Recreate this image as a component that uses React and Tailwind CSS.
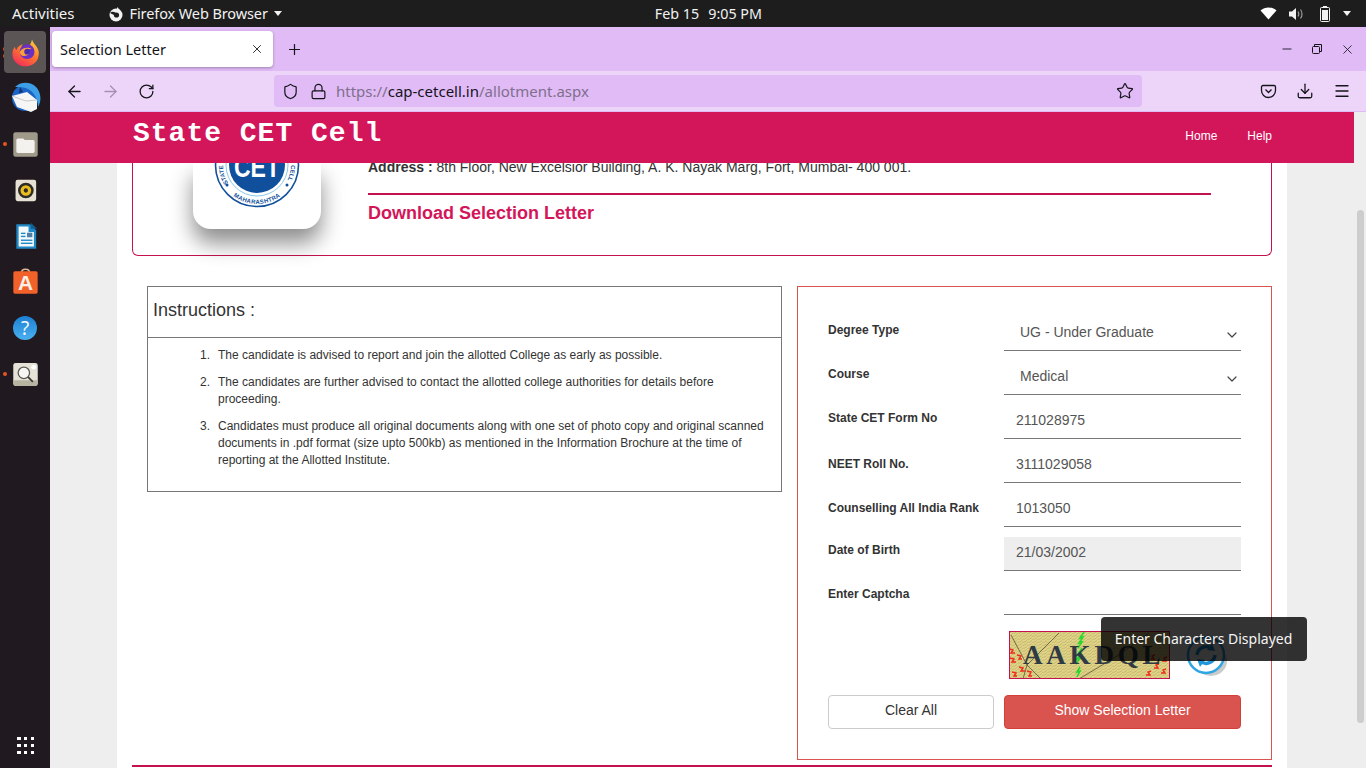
import React from 'react'
import {
    ArrowLeft,
    ArrowRight,
    RotateCw,
    Shield,
    Lock,
    Star,
    Download,
    Menu,
    Minus,
    X,
    Plus,
    ChevronDown
} from 'lucide-react'

const FirefoxIcon = () => (
    <svg width="31" height="31" viewBox="0 0 38 38">
        <defs>
            <linearGradient id="ffa" x1="0.8" y1="0" x2="0.2" y2="1">
                <stop offset="0" stopColor="#ffd23a" />
                <stop offset="0.45" stopColor="#ff7a2c" />
                <stop offset="1" stopColor="#f2295f" />
            </linearGradient>
        </defs>
        <path d="M27 3c1 4 3 5 5 8 3 4 4 8 3 12-1 8-8 13-16 13C10 36 3 29 3 21c0-4 1-7 3-9 0 2 1 3 2 4 1-4 4-6 8-7-1 1-2 2-2 3 3-1 6 0 8 0 3-2 4-5 5-9z" fill="url(#ffa)" />
        <circle cx="21" cy="18" r="9" fill="#6b2fc4" />
        <path d="M12 18c3-5 10-6 15-3-3-1-7 0-8 2 2 0 4 1 5 3-2 3-6 4-9 3-2-1-3-3-3-5z" fill="#f8a13a" />
        <circle cx="21" cy="18" r="3.500" fill="#4a2bb0" />
    </svg>
)

const ThunderbirdIcon = () => (
    <svg width="38" height="38" viewBox="0 0 38 38">
        <circle cx="19" cy="19" r="13" fill="#1b63c4" />
        <path d="M9 8c5-5 15-6 21 0 5 5 6 14 2 20 0-8-4-15-10-18-4-2-9-2-13-2z" fill="#3d9ee8" />
        <path d="M6 17l15-4 10 8v9l-6 3-14-5z" fill="#f6f6f6" />
        <path d="M6 17l14 5 11-1" fill="none" stroke="#c8c8c8" strokeWidth="1" />
        <path d="M14 8l3 5-4 1z" fill="#10346e" />
    </svg>
)

const FilesIcon = () => (
    <svg width="29" height="29" viewBox="0 0 38 38">
        <rect x="3" y="3" width="32" height="32" rx="3" fill="#a09a8a" />
        <path d="M7 13a2 2 0 0 1 2-2h7l2 2h11a2 2 0 0 1 2 2v13a2 2 0 0 1-2 2H9a2 2 0 0 1-2-2z" fill="#f4f2ee" />
    </svg>
)

const RhythmboxIcon = () => (
    <svg width="27" height="27" viewBox="0 0 38 38">
        <rect x="5" y="4" width="29" height="30" rx="3" fill="#e6e1d3" />
        <circle cx="19.500" cy="19" r="11" fill="#2e2b27" />
        <circle cx="19.500" cy="19" r="7.500" fill="#e8bd1d" />
        <circle cx="19.500" cy="19" r="3" fill="#2e2b27" />
    </svg>
)

const WriterIcon = () => (
    <svg width="29" height="29" viewBox="0 0 38 38">
        <path d="M7 3h18l8 8v24H7z" fill="#1f88c7" />
        <path d="M10 6h13v7h7v19H10z" fill="#f4f8fb" />
        <path d="M26 1l8 8h-8z" fill="#0f5f92" />
        <rect x="13" y="14" width="6" height="1.800" fill="#1f88c7" />
        <rect x="13" y="18" width="6" height="1.800" fill="#1f88c7" />
        <rect x="21" y="14" width="7" height="6" fill="#4b7fa8" />
        <rect x="13" y="23" width="15" height="1.800" fill="#1f88c7" />
        <rect x="13" y="27" width="15" height="1.800" fill="#1f88c7" />
    </svg>
)

const StoreIcon = () => (
    <svg width="33" height="33" viewBox="0 0 38 38">
        <path d="M14 9c0-7 10-7 10 0" fill="none" stroke="#e6b89a" strokeWidth="1.600" />
        <rect x="5" y="6" width="28" height="26" rx="2" fill="#f0622a" />
        <text x="19" y="28" textAnchor="middle" fontSize="24" fontWeight="700" fill="#fdeee6" fontFamily="Liberation Sans">A</text>
    </svg>
)

const HelpIcon = () => (
    <svg width="38" height="38" viewBox="0 0 38 38">
        <defs>
            <linearGradient id="hlp" x1="0" y1="0" x2="0" y2="1">
                <stop offset="0" stopColor="#1c7fd2" />
                <stop offset="1" stopColor="#4bb0f0" />
            </linearGradient>
        </defs>
        <circle cx="19" cy="19" r="12" fill="url(#hlp)" />
        <text x="19" y="26" textAnchor="middle" fontSize="19" fill="#f4f9ff" fontFamily="Noto Sans">?</text>
    </svg>
)

const ViewerIcon = () => (
    <svg width="31" height="31" viewBox="0 0 38 38">
        <rect x="4" y="5" width="30" height="28" rx="3" fill="#e5e2d8" />
        <path d="M4 26h30v4a3 3 0 0 1-3 3H7a3 3 0 0 1-3-3z" fill="#b8b4a2" />
        <circle cx="17" cy="17" r="7" fill="#f6f6f4" stroke="#5c5a54" strokeWidth="1.600" />
        <path d="M22 22l6 6" stroke="#3b3a36" strokeWidth="2.200" />
        <circle cx="29" cy="10" r="3" fill="#ffffff" />
    </svg>
)

const dockItems = [
    { icon: FirefoxIcon, active: true, dots: 2 },
    { icon: ThunderbirdIcon },
    { icon: FilesIcon, dots: 1 },
    { icon: RhythmboxIcon },
    { icon: WriterIcon },
    { icon: StoreIcon },
    { icon: HelpIcon },
    { icon: ViewerIcon, dots: 1 }
]

const Dock = () => (
    <div className="w-[50px] shrink-0 bg-[#201a20] flex flex-col pt-[4px] pb-[14px]">
        {dockItems.map(({ icon: Icon, active, dots }, i) => (
            <div key={i} className="h-[42px] mb-[4px] shrink-0 flex items-center relative">
                <div className="w-[4px] flex flex-col items-center gap-[3px] ml-[3px]">
                    {Array.from({ length: dots || 0 }).map((_, d) => (
                        <span key={d} className="w-[4px] h-[4px] rounded-full bg-[#e95420]" />
                    ))}
                </div>
                <div className={`ml-[-3px] w-[42px] h-[42px] rounded-[4px] flex items-center justify-center ${active ? 'bg-[#5b5556]' : ''}`}>
                    <Icon />
                </div>
            </div>
        ))}
        <div className="mt-auto ml-[17px] grid grid-cols-3 gap-[3.5px] w-[17px]">
            {Array.from({ length: 9 }).map((_, i) => (
                <span key={i} className="w-[3.5px] h-[3.5px] bg-white" />
            ))}
        </div>
    </div>
)

const TopBar = () => (
    <div className="h-[27px] shrink-0 bg-[#1d1d1d] text-[#f2f2f2] text-[14.5px] flex items-center font-['Noto_Sans',sans-serif]">
        <span className="ml-[12px] text-[15px]">Activities</span>
        <svg className="ml-[33px]" width="16" height="16" viewBox="0 0 16 16">
            <circle cx="8" cy="9" r="6.500" fill="#f2f2f2" />
            <circle cx="8.500" cy="9" r="2.600" fill="#1d1d1d" />
            <path d="M2 7c2-2 4-1 6 0l-2 2z" fill="#1d1d1d" />
            <path d="M9 1l3 3-3 1z" fill="#f2f2f2" />
        </svg>
        <span className="ml-[6px] tracking-[-0.1px]">Firefox Web Browser</span>
        <span className="ml-[6px] w-0 h-0 border-x-[4.5px] border-x-transparent border-t-[5px] border-t-[#f2f2f2]" />
        <span className="ml-[373px] text-[14.300px]">Feb 15</span>
        <span className="ml-[9px] text-[14.300px]">9:05 PM</span>
        <div className="ml-auto mr-[15px] flex items-center">
            <svg width="17" height="13" viewBox="0 0 17 13">
                <path d="M0.500 3.500C5 -0.500 12 -0.500 16.500 3.500L8.500 12.500z" fill="#fff" />
            </svg>
            <svg className="ml-[12px]" width="15" height="14" viewBox="0 0 15 14">
                <path d="M0 4.500h3L7 1v12L3 9.500H0z" fill="#f2f2f2" />
                <path d="M9 4.500c1 1.500 1 3.500 0 5M11.500 2.500c2 2.500 2 6.500 0 9" fill="none" stroke="#9a9a9a" strokeWidth="1.200" />
            </svg>
            <svg className="ml-[16px]" width="10" height="16" viewBox="0 0 10 16">
                <rect x="3" y="0" width="4" height="2" fill="#f2f2f2" />
                <rect x="0.500" y="1.500" width="9" height="14" rx="1" fill="none" stroke="#f2f2f2" />
                <rect x="2" y="4" width="6" height="10" fill="#f2f2f2" />
            </svg>
            <span className="ml-[13px] w-0 h-0 border-x-[4.500px] border-x-transparent border-t-[5px] border-t-[#f2f2f2]" />
        </div>
    </div>
)

const BrowserChrome = () => (
    <div className="shrink-0 font-['Noto_Sans',sans-serif]">
        <div className="h-[44px] bg-[#e0bbf6] flex items-center pl-[2px] text-[#15141a]">
            <div className="w-[221px] h-[36px] bg-white rounded-[4px] shadow-[0_1px_3px_rgba(0,0,0,0.3)] flex items-center pl-[8px] pr-[9px]">
                <span className="text-[14.500px] flex-1 pt-[1px]">Selection Letter</span>
                <X size={14} strokeWidth={1.500} />
            </div>
            <Plus size={17} strokeWidth={1.700} className="ml-[13px]" />
            <div className="ml-auto flex items-center gap-[17px] pr-[11px]">
                <Minus size={14} strokeWidth={1.500} />
                <svg width="12" height="12" viewBox="0 0 12 12" fill="none" stroke="#15141a">
                    <rect x="1.500" y="3.500" width="7" height="7" rx="1" />
                    <path d="M3.500 3V1.500h7v7H9" />
                </svg>
                <X size={15} strokeWidth={1.300} />
            </div>
        </div>
        <div className="h-[41px] bg-[#edd5fa] border-b border-[#e0bbf6] flex items-center text-[#15141a]">
            <ArrowLeft size={19} strokeWidth={1.600} className="ml-[15px]" />
            <ArrowRight size={19} strokeWidth={1.600} className="ml-[17px] text-[#a58fb2]" />
            <RotateCw size={17} strokeWidth={1.800} className="ml-[18px]" />
            <div className="ml-[119px] w-[868px] h-[32px] rounded-[4px] bg-[#e0bbf6] flex items-center pl-[8px] pr-[8px]">
                <Shield size={17} strokeWidth={1.700} />
                <Lock size={17} strokeWidth={1.700} className="ml-[11px]" />
                <span className="ml-[9px] text-[15px] pt-[1px] text-[#7f6f8c]">
                    https://<span className="text-[#15141a]">cap-cetcell.in</span>/allotment.aspx
                </span>
                <Star size={18} strokeWidth={1.600} className="ml-auto" />
            </div>
            <div className="ml-auto flex items-center gap-[19px] pr-[15px]">
                <svg width="17" height="16" viewBox="0 0 16 16" fill="none" stroke="#15141a" strokeWidth="1.300">
                    <path d="M2.500 2.500h11a1.500 1.500 0 0 1 1.500 1.500v3.500a7 7 0 0 1-14 0V4a1.500 1.500 0 0 1 1.500-1.500z" />
                    <path d="M5 6.500l3 3 3-3" />
                </svg>
                <Download size={18} strokeWidth={1.700} />
                <Menu size={18} strokeWidth={1.700} />
            </div>
        </div>
    </div>
)

const SealLogo = () => (
    <svg width="86" height="86" viewBox="0 0 86 86">
        <defs>
            <path id="sealBottom" d="M4 43a39 39 0 0 0 78 0" />
            <path id="sealLeft" d="M43 77A34 34 0 0 1 43 9" />
            <path id="sealRight" d="M43 9A34 34 0 0 1 43 77" />
        </defs>
        <circle cx="43" cy="43" r="41.500" fill="#ffffff" stroke="#12509b" strokeWidth="1.600" />
        <circle cx="43" cy="43" r="31" fill="#ffffff" stroke="#8cc8ea" strokeWidth="1" />
        <circle cx="43" cy="43" r="28" fill="#0f4f9c" />
        <text x="43" y="55" textAnchor="middle" fontSize="30" fontWeight="700" fill="#ffffff" fontFamily="Liberation Sans" textLength="46" lengthAdjust="spacingAndGlyphs">CET</text>
        <text fontSize="6" fontWeight="700" fill="#12509b" letterSpacing="0.300" fontFamily="Liberation Sans">
            <textPath href="#sealBottom" startOffset="50%" textAnchor="middle">MAHARASHTRA</textPath>
        </text>
        <text fontSize="6" fontWeight="700" fill="#12509b" fontFamily="Liberation Sans">
            <textPath href="#sealLeft" startOffset="32%">STATE</textPath>
        </text>
        <text fontSize="6" fontWeight="700" fill="#12509b" fontFamily="Liberation Sans">
            <textPath href="#sealRight" startOffset="50%">CELL</textPath>
        </text>
        <circle cx="13" cy="63" r="1.500" fill="#12509b" />
        <circle cx="73" cy="63" r="1.500" fill="#12509b" />
    </svg>
)

const Captcha = () => (
    <svg width="161" height="48" viewBox="0 0 161 48" className="block">
        <defs>
            <pattern id="grain" width="5" height="3" patternUnits="userSpaceOnUse">
                <rect width="5" height="3" fill="#dfd387" />
                <path d="M0 2.500l3-2M3 3l2-1.200" stroke="#b5a85c" strokeWidth="0.600" />
            </pattern>
        </defs>
        <rect width="161" height="48" fill="url(#grain)" />
        <path d="M2 4l16 30 14 14M50 2L18 34l-4 14M70 48l40-24 30-22" fill="none" stroke="#4a4330" strokeWidth="0.700" />
        <path d="M75 1l-4 6 3-1-4 6 3-1-4 6M73 17l-4 6 3-1-4 6 3-1-4 6M71 36l-3 5 3-1-3 6" fill="none" stroke="#25d82a" strokeWidth="1.600" />
        <path d="M1 18l3 1-2 3 4 0M1 27l4 1-2 3 4 0M8 24l4 1-2 3 3 0M10 36l4 1-2 3 4 0M3 41l4 1-2 3 3 0M18 40l4 1-2 4 3 0M142 40l-3 1 2 3-4 0M150 33l-3 1 2 3-4 0M158 26l-3 1 2 3-4 0M157 38l-3 1 2 3-4 0M146 24l-3 1 2 3-3 0" fill="none" stroke="#f02a20" strokeWidth="1.400" />
        <text x="14" y="33" fontSize="27" fontWeight="700" letterSpacing="3.800" fill="#2f3a45" fontFamily="Liberation Serif">AAKDQL</text>
        <rect x="0.500" y="0.500" width="160" height="47" fill="none" stroke="#c3124f" />
    </svg>
)

const RefreshIcon = () => (
    <svg width="44" height="44" viewBox="0 0 44 44" className="block">
        <ellipse cx="26" cy="27" rx="16" ry="15" fill="#a8a8a8" opacity="0.600" />
        <circle cx="21" cy="21" r="18" fill="#ffffff" stroke="#2fa6e4" strokeWidth="2.500" />
        <path d="M12 21a9 9 0 0 1 15-6M30 21a9 9 0 0 1-15 6" fill="none" stroke="#2196d8" strokeWidth="3.500" />
        <path d="M27 9l3 8-8-1zM15 33l-3-8 8 1z" fill="#2196d8" />
    </svg>
)

const fields = [
    { label: 'Degree Type', value: 'UG - Under Graduate', select: true, labelPad: 'pt-[5px]' },
    { label: 'Course', value: 'Medical', select: true, labelPad: 'pt-[5px]' },
    { label: 'State CET Form No', value: '211028975', labelPad: 'pt-[5px]' },
    { label: 'NEET Roll No.', value: '3111029058', labelPad: 'pt-[7px]' },
    { label: 'Counselling All India Rank', value: '1013050', labelPad: 'pt-[7px]' },
    { label: 'Date of Birth', value: '21/03/2002', disabled: true, labelPad: 'pt-[5px]' },
    { label: 'Enter Captcha', value: '', labelPad: 'pt-[5px]' }
]

const FormRow = ({ label, value, select, disabled, labelPad }) => (
    <div className="flex h-[34px] mb-[10px]">
        <label className={`w-[176px] shrink-0 text-[12px] leading-[17px] font-bold text-[#333] ${labelPad}`}>{label}</label>
        <div className={`w-[237px] h-[34px] border-b border-[#777] flex items-center pb-[2px] text-[14px] text-[#555] ${disabled ? 'bg-[#eeeeee]' : ''} ${select ? 'pl-[16px] pr-[1px]' : 'pl-[12px]'}`}>
            <span className="flex-1">{value}</span>
            {select && <ChevronDown size={16} strokeWidth={1.800} className="mt-[4px] text-[#444]" />}
        </div>
    </div>
)

const instructions = [
    'The candidate is advised to report and join the allotted College as early as possible.',
    'The candidates are further advised to contact the allotted college authorities for details before proceeding.',
    'Candidates must produce all original documents along with one set of photo copy and original scanned documents in .pdf format (size upto 500kb) as mentioned in the Information Brochure at the time of reporting at the Allotted Institute.'
]

const Page = () => (
    <div className="flex-1 min-h-0 flex font-['Liberation_Sans',Arial,sans-serif] bg-[#eeeeee]">
        <div className="flex-1 min-w-0 flex flex-col overflow-hidden">
            {/* Navbar */}
            <div className="relative z-10 h-[51px] shrink-0 bg-[#d3155a] flex items-start pl-[83px] pr-[82px] text-white">
                <span className="font-['Liberation_Mono',monospace] font-bold text-[28px] tracking-[1px] leading-[40px] mt-[2px]">State CET Cell</span>
                <div className="ml-auto flex gap-[30px] text-[12px] mt-[15px]">
                    <span>Home</span>
                    <span>Help</span>
                </div>
            </div>

            <div className="mx-[67px] flex-1 bg-white px-[15px]">
                {/* Header card */}
                <div className="h-[93px] border border-t-0 border-[#c3124f] rounded-b-[6px] flex">
                    <div className="ml-[60px] w-[128px] h-[66px] bg-white rounded-b-[18px] shadow-[0_14px_22px_rgba(0,0,0,0.45)] flex justify-center">
                        <div className="mt-[-41px]">
                            <SealLogo />
                        </div>
                    </div>
                    <div className="ml-[47px] w-[843px] mt-[-6px]">
                        <p className="text-[14px] leading-[20px] text-[#333]"><b>Address :</b> 8th Floor, New Excelsior Building, A. K. Nayak Marg, Fort, Mumbai- 400 001.</p>
                        <div className="mt-[16px] h-[2px] bg-[#c3124f]" />
                        <p className="mt-[7px] text-[18px] leading-[22px] font-bold text-[#d3155a]">Download Selection Letter</p>
                    </div>
                </div>

                <div className="mt-[30px] pl-[15px] flex gap-[15px] items-start">
                    {/* Instructions */}
                    <div className="w-[635px] h-[206px] border border-[#777] text-[#333]">
                        <div className="h-[51px] border-b border-[#777] pl-[5px] pb-[4px] flex items-center text-[18px]">Instructions :</div>
                        <ol className="pl-[52px] pr-[13px] pt-[9px] text-[12px] leading-[17px]">
                            {instructions.map((text, i) => (
                                <li key={i} className="flex mb-[10px]">
                                    <span className="w-[18px] shrink-0">{i + 1}.</span>
                                    <span>{text}</span>
                                </li>
                            ))}
                        </ol>
                    </div>

                    {/* Selection form */}
                    <div className="w-[475px] h-[474px] border border-[#d9534f] pl-[30px] pt-[30px]">
                        {fields.map((field) => (
                            <FormRow key={field.label} {...field} />
                        ))}
                        <div className="relative ml-[181px] mt-[16px] h-[48px] flex items-center">
                            <Captcha />
                            <div className="ml-[15px] mt-[2px]">
                                <RefreshIcon />
                            </div>
                            <div className="absolute left-[92px] top-[-14px] w-[206px] h-[44px] rounded-[4px] bg-black/80 text-[#f5f5f5] text-[14px] pb-[2px] pr-[1px] font-['Noto_Sans',sans-serif] flex items-center justify-center">
                                Enter Characters Displayed
                            </div>
                        </div>
                        <div className="mt-[16px] flex gap-[10px] text-[14px]">
                            <button className="w-[166px] h-[34px] pb-[3px] bg-white border border-[#ccc] rounded-[4px] text-[#333]">Clear All</button>
                            <button className="w-[237px] h-[34px] pb-[3px] bg-[#d9534f] border border-[#d43f3a] rounded-[4px] text-white">Show Selection Letter</button>
                        </div>
                    </div>
                </div>

                <div className="mt-[5px] h-[2px] bg-[#c3124f]" />
            </div>
        </div>

        {/* Scrollbar */}
        <div className="w-[12px] shrink-0 pt-[98px] flex justify-center">
            <div className="w-[7px] h-[513px] ml-[1px] rounded-full bg-[#cdcdcd]" />
        </div>
    </div>
)

export default function App() {
    return (
        <div className="w-[1366px] h-[768px] overflow-hidden flex flex-col">
            <TopBar />
            <div className="flex-1 min-h-0 flex">
                <Dock />
                <div className="flex-1 min-w-0 flex flex-col">
                    <BrowserChrome />
                    <Page />
                </div>
            </div>
        </div>
    )
}
